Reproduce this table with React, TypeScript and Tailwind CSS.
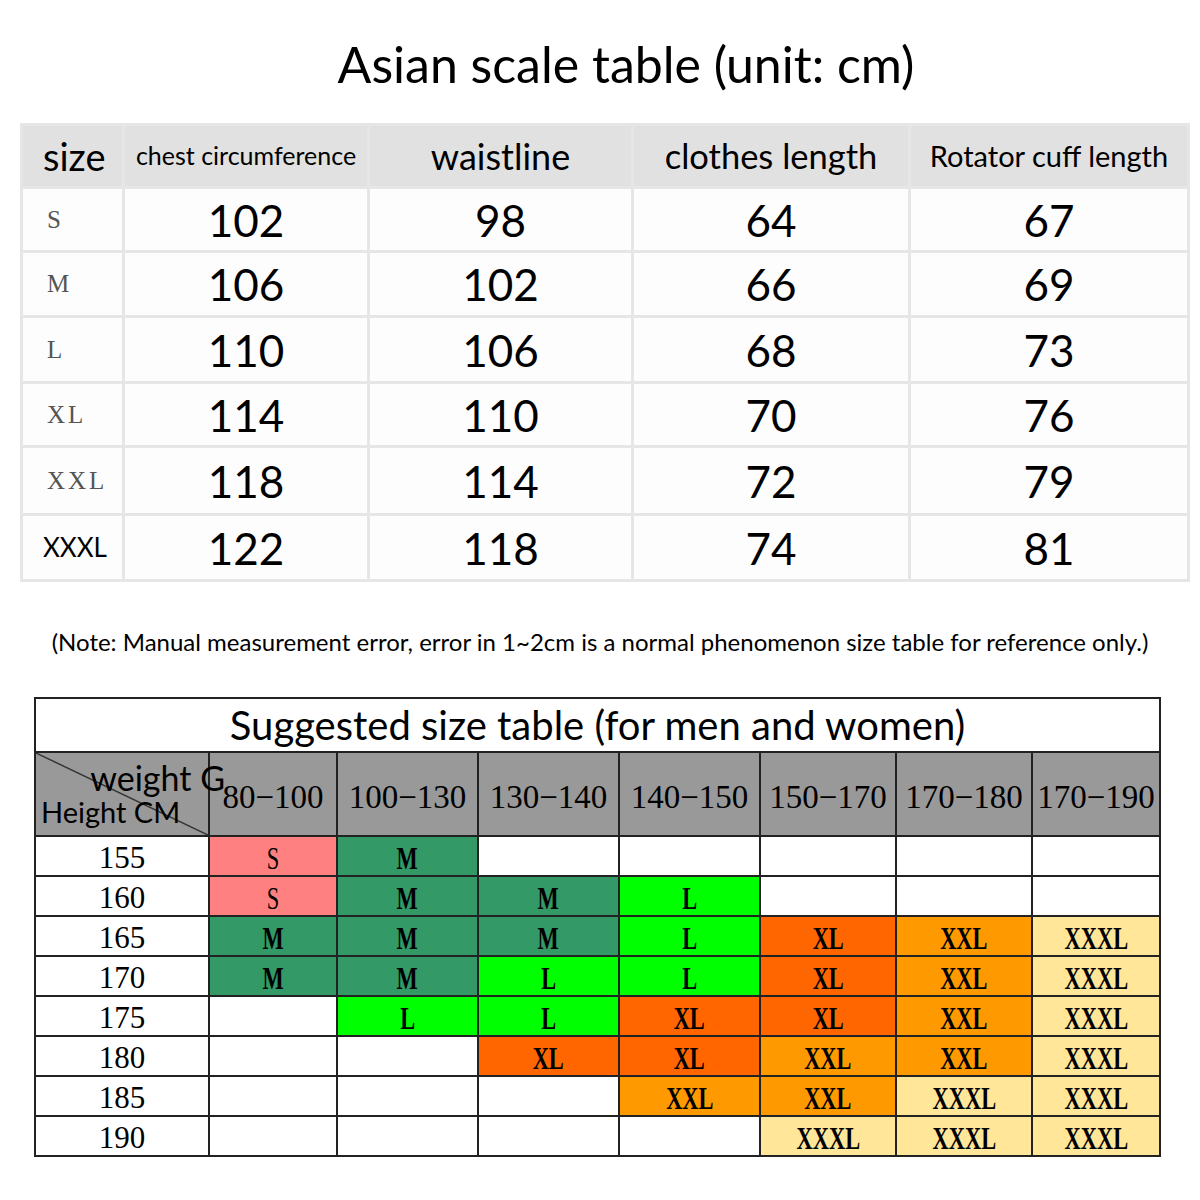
import React from 'react'

// Asian scale rows: size, chest, waist, length, cuff
const scaleRows = [
  ['S', '102', '98', '64', '67'],
  ['M', '106', '102', '66', '69'],
  ['L', '110', '106', '68', '73'],
  ['XL', '114', '110', '70', '76'],
  ['XXL', '118', '114', '72', '79'],
  ['XXXL', '122', '118', '74', '81'],
]
const rowH = ['h-[64px]', 'h-[65px]', 'h-[66px]', 'h-[64px]', 'h-[68px]', 'h-[66px]']

const weights = ['80−100', '100−130', '130−140', '140−150', '150−170', '170−180', '170−190']

// cell colour keys
const C: Record<string, string> = {
  S: 'bg-[#ff8080]',
  M: 'bg-[#339966]',
  L: 'bg-[#00ff00]',
  XL: 'bg-[#ff6600]',
  XXL: 'bg-[#ff9900]',
  XXXL: 'bg-[#ffe699]',
  '': 'bg-white',
}

const suggest: [string, string[]][] = [
  ['155', ['S', 'M', '', '', '', '', '']],
  ['160', ['S', 'M', 'M', 'L', '', '', '']],
  ['165', ['M', 'M', 'M', 'L', 'XL', 'XXL', 'XXXL']],
  ['170', ['M', 'M', 'L', 'L', 'XL', 'XXL', 'XXXL']],
  ['175', ['', 'L', 'L', 'XL', 'XL', 'XXL', 'XXXL']],
  ['180', ['', '', 'XL', 'XL', 'XXL', 'XXL', 'XXXL']],
  ['185', ['', '', '', 'XXL', 'XXL', 'XXXL', 'XXXL']],
  ['190', ['', '', '', '', 'XXXL', 'XXXL', 'XXXL']],
]

const colWidths = ['w-[128px]', 'w-[141px]', 'w-[141px]', 'w-[141px]', 'w-[136px]', 'w-[136px]', 'w-[128px]']

const sans = "font-['Lato','Noto_Sans',sans-serif]"
const serif = "font-['Liberation_Serif','DejaVu_Serif',serif]"

export default function App() {
  return (
    <div className="w-[1200px] h-[1200px] bg-white text-black overflow-hidden">
      {/* Title */}
      <div className={`${sans} h-[123px] pt-[29px] text-center text-[50px] leading-[70px] pl-[52px]`}>
        Asian scale table (unit: cm)
      </div>

      {/* Asian scale table */}
      <div className="pl-[20px]">
        <table className={`${sans} border-collapse w-[1167px] table-fixed`}>
          <colgroup>
            <col className="w-[102px]" />
            <col className="w-[245px]" />
            <col className="w-[264px]" />
            <col className="w-[277px]" />
            <col className="w-[279px]" />
          </colgroup>
          <thead>
            <tr className="h-[63px] bg-[#e1e1e1]">
              <th className="border-[3px] border-[#e6e6e6] text-left pl-[20px] text-[38px] font-normal">size</th>
              <th className="border-[3px] border-[#e6e6e6] text-[25px] font-normal whitespace-nowrap">chest circumference</th>
              <th className="border-[3px] border-[#e6e6e6] text-[36px] font-normal">waistline</th>
              <th className="border-[3px] border-[#e6e6e6] text-[34.5px] font-normal">clothes length</th>
              <th className="border-[3px] border-[#e6e6e6] text-[29px] font-normal whitespace-nowrap">Rotator cuff length</th>
            </tr>
          </thead>
          <tbody>
            {scaleRows.map((r, i) => (
              <tr key={r[0]} className={`${rowH[i]} bg-[#fdfdfd]`}>
                <td className="border-[3px] border-[#e6e6e6] pl-[24px]">
                  {i < 5 ? (
                    <span className={`${serif} text-[25px] tracking-[3px] text-[#555]`}>{r[0]}</span>
                  ) : (
                    <span className={`${sans} text-[26px] -ml-[4px]`}>{r[0]}</span>
                  )}
                </td>
                {r.slice(1).map((v, j) => (
                  <td key={j} className="border-[3px] border-[#e6e6e6] text-center text-[44px] leading-none">
                    {v}
                  </td>
                ))}
              </tr>
            ))}
          </tbody>
        </table>
      </div>

      {/* Note */}
      <div className={`${sans} mt-[44px] h-[32px] text-center text-[24px] leading-[32px]`}>
        (Note: Manual measurement error, error in 1~2cm is a normal phenomenon size table for reference only.)
      </div>

      {/* Suggested size table */}
      <div className="pl-[34px] mt-[39px]">
        <table className="border-collapse w-[1126px] table-fixed border-2 border-[#222]">
          <colgroup>
            <col className="w-[174px]" />
            {colWidths.map((w, i) => (
              <col key={i} className={w} />
            ))}
          </colgroup>
          <thead>
            <tr className="h-[54px]">
              <th colSpan={8} className={`${sans} border-2 border-[#222] text-[40px] font-normal leading-none`}>
                Suggested size table (for men and women)
              </th>
            </tr>
            <tr className="h-[84px] bg-[#999999]">
              <th className="relative border-2 border-[#222] font-normal p-0">
                <svg className="absolute inset-0 w-full h-full" viewBox="0 0 174 84" preserveAspectRatio="none">
                  <line x1="0" y1="0" x2="174" y2="84" stroke="#333" strokeWidth="1.5" />
                </svg>
                <div className={`${sans} relative flex flex-col h-[82px]`}>
                  <span className="text-[34px] leading-[36px] mt-[7px] self-end -mr-[17px] whitespace-nowrap">weight G</span>
                  <span className="text-[29px] leading-[32px] self-start pl-[5px] whitespace-nowrap">Height CM</span>
                </div>
              </th>
              {weights.map((w) => (
                <th key={w} className={`${serif} border-2 border-[#222] text-[33px] font-normal whitespace-nowrap pt-[8px]`}>
                  {w}
                </th>
              ))}
            </tr>
          </thead>
          <tbody>
            {suggest.map(([h, cells]) => (
              <tr key={h} className="h-[40px]">
                <td className={`${serif} border-2 border-[#222] bg-white text-center text-[31px] leading-none pt-[2px]`}>{h}</td>
                {cells.map((c, j) => (
                  <td key={j} className={`${C[c]} ${serif} border-2 border-[#222] text-center text-[32px] leading-none pt-[4px]`}>
                    <span className={`inline-block scale-x-70 ${c === 'S' ? 'font-normal' : 'font-bold'}`}>{c}</span>
                  </td>
                ))}
              </tr>
            ))}
          </tbody>
        </table>
      </div>
    </div>
  )
}
